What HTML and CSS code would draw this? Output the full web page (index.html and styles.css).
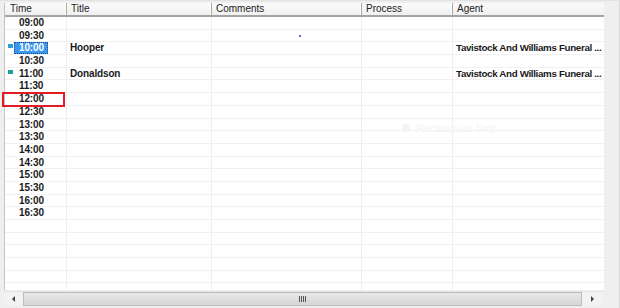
FILE: index.html
```html
<!DOCTYPE html>
<html lang="en">
<head>
    <meta charset="UTF-8">
    <title>Diary</title>
    <link rel="stylesheet" href="styles.css">
</head>
<body>

<div class="window">
    <div class="list">
        <div class="row head">
            <div class="cell first">Time</div>
            <div class="cell">Title</div>
            <div class="cell">Comments</div>
            <div class="cell">Process</div>
            <div class="cell">Agent</div>
        </div>
        <div class="rows">
            <div class="row"><div class="cell time"><span class="mark"></span><span class="t">09:00</span></div><div class="cell"></div><div class="cell"></div><div class="cell"></div><div class="cell"></div></div>
            <div class="row"><div class="cell time"><span class="mark"></span><span class="t">09:30</span></div><div class="cell"></div><div class="cell"></div><div class="cell"></div><div class="cell"></div></div>
            <div class="row"><div class="cell time"><span class="mark blue"></span><span class="t selected">10:00</span></div><div class="cell">Hooper</div><div class="cell"></div><div class="cell"></div><div class="cell agent">Tavistock And Williams Funeral ...</div></div>
            <div class="row"><div class="cell time"><span class="mark"></span><span class="t">10:30</span></div><div class="cell"></div><div class="cell"></div><div class="cell"></div><div class="cell"></div></div>
            <div class="row"><div class="cell time"><span class="mark teal"></span><span class="t">11:00</span></div><div class="cell">Donaldson</div><div class="cell"></div><div class="cell"></div><div class="cell agent">Tavistock And Williams Funeral ...</div></div>
            <div class="row"><div class="cell time"><span class="mark"></span><span class="t">11:30</span></div><div class="cell"></div><div class="cell"></div><div class="cell"></div><div class="cell"></div></div>
            <div class="row"><div class="cell time"><span class="mark"></span><span class="t">12:00</span></div><div class="cell"></div><div class="cell"></div><div class="cell"></div><div class="cell"></div></div>
            <div class="row"><div class="cell time"><span class="mark"></span><span class="t">12:30</span></div><div class="cell"></div><div class="cell"></div><div class="cell"></div><div class="cell"></div></div>
            <div class="row"><div class="cell time"><span class="mark"></span><span class="t">13:00</span></div><div class="cell"></div><div class="cell"></div><div class="cell"></div><div class="cell"></div></div>
            <div class="row"><div class="cell time"><span class="mark"></span><span class="t">13:30</span></div><div class="cell"></div><div class="cell"></div><div class="cell"></div><div class="cell"></div></div>
            <div class="row"><div class="cell time"><span class="mark"></span><span class="t">14:00</span></div><div class="cell"></div><div class="cell"></div><div class="cell"></div><div class="cell"></div></div>
            <div class="row"><div class="cell time"><span class="mark"></span><span class="t">14:30</span></div><div class="cell"></div><div class="cell"></div><div class="cell"></div><div class="cell"></div></div>
            <div class="row"><div class="cell time"><span class="mark"></span><span class="t">15:00</span></div><div class="cell"></div><div class="cell"></div><div class="cell"></div><div class="cell"></div></div>
            <div class="row"><div class="cell time"><span class="mark"></span><span class="t">15:30</span></div><div class="cell"></div><div class="cell"></div><div class="cell"></div><div class="cell"></div></div>
            <div class="row"><div class="cell time"><span class="mark"></span><span class="t">16:00</span></div><div class="cell"></div><div class="cell"></div><div class="cell"></div><div class="cell"></div></div>
            <div class="row"><div class="cell time"><span class="mark"></span><span class="t">16:30</span></div><div class="cell"></div><div class="cell"></div><div class="cell"></div><div class="cell"></div></div>
            <div class="row"><div class="cell time"></div><div class="cell"></div><div class="cell"></div><div class="cell"></div><div class="cell"></div></div>
            <div class="row"><div class="cell time"></div><div class="cell"></div><div class="cell"></div><div class="cell"></div><div class="cell"></div></div>
            <div class="row"><div class="cell time"></div><div class="cell"></div><div class="cell"></div><div class="cell"></div><div class="cell"></div></div>
            <div class="row"><div class="cell time"></div><div class="cell"></div><div class="cell"></div><div class="cell"></div><div class="cell"></div></div>
            <div class="row"><div class="cell time"></div><div class="cell"></div><div class="cell"></div><div class="cell"></div><div class="cell"></div></div>
            <div class="row"><div class="cell time"></div><div class="cell"></div><div class="cell"></div><div class="cell"></div><div class="cell"></div></div>
        </div>
    </div>

    <div class="hscroll">
        <div class="arrow"><span class="tri left"></span></div>
        <div class="thumb"><span class="grip"></span></div>
        <div class="arrow"><span class="tri right"></span></div>
    </div>

    <!-- annotation + screen artefacts over the list -->
    <div class="highlight"></div>
    <div class="dot"></div>
    <div class="snip"><span class="snip-icon"></span>Rectangular Snip</div>
</div>

</body>
</html>
```

FILE: styles.css
```css
body {
    margin: 0;
    font-family: 'Liberation Sans', Arial, sans-serif;
    color: #1a1a1a;
}
.window {
    position: relative;
    width: 620px;
    height: 308px;
    box-sizing: border-box;
    padding: 2px 15px 3px 4px;
    background-color: #efefef;
    border-right: 1px solid #d8d8d8;
    border-top: 1px solid #e2e2e2;
}
.list {
    height: 287px;
    background-color: #fff;
    border-left: 1px solid #c4c4c4;
    overflow: hidden;
}
.row {
    display: grid;
    grid-template-columns: 62px 145px 150px 91px 152px;
    height: 12.7px;
}
.cell {
    box-sizing: border-box;
    padding-left: 3px;
    white-space: nowrap;
    overflow: hidden;
    font-size: 10px;
    font-weight: bold;
    line-height: 12px;
    letter-spacing: -0.15px;
}
.cell.agent {
    font-size: 9.8px;
    letter-spacing: -0.35px;
}
.rows .cell {
    border-right: 1px solid #efefef;
    border-bottom: 1px solid #f1f1f1;
}
.rows .cell:last-child {
    border-right: none;
}
.head {
    height: 14px;
    box-sizing: border-box;
    background: linear-gradient(#fbfbfb, #f0f0f0);
    border-bottom: 2px solid #a3a3a3;
}
.head .cell {
    padding-left: 4px;
    font-size: 10px;
    font-weight: normal;
    letter-spacing: 0;
    color: #222;
    border-right: 1px solid #a8a8a8;
    box-shadow: inset -1px 0 0 #fff;
}
.head .cell.first {
    padding-left: 5px;
}
.head .cell:last-child {
    border-right: none;
    box-shadow: none;
}
.time {
    display: flex;
    align-items: flex-start;
}
.mark {
    flex: none;
    width: 5px;
    height: 4px;
    margin: 2px 1px 0 0;
}
.mark.blue {
    background-color: #2d9fd8;
}
.mark.teal {
    background-color: #16a2a0;
}
.t {
    height: 12px;
    padding: 0 4px 0 5px;
    line-height: 12px;
}
.t.selected {
    background-color: #3a98f0;
    color: #fff;
    outline: 1px dotted #1d4f8a;
    outline-offset: -1px;
}
.hscroll {
    display: flex;
    width: 599px;
    height: 15px;
    margin-top: 1px;
    box-sizing: border-box;
    border-top: 1px solid #e4e4e4;
}
.arrow {
    width: 19px;
    display: flex;
    justify-content: center;
    align-items: center;
    background-color: #f2f2f2;
}
.arrow:last-child {
    width: 21px;
}
.tri {
    width: 0;
    height: 0;
    border-top: 3px solid transparent;
    border-bottom: 3px solid transparent;
}
.tri.left {
    border-right: 3px solid #444;
}
.tri.right {
    border-left: 3px solid #444;
}
.thumb {
    flex: 1;
    display: flex;
    justify-content: center;
    align-items: center;
    box-sizing: border-box;
    background: linear-gradient(#e8e8e8, #d6d6d6);
    border: 1px solid #bdbdbd;
}
.grip {
    width: 7px;
    height: 6px;
    background: repeating-linear-gradient(90deg, #555 0 1px, transparent 1px 2px);
}
.highlight {
    position: absolute;
    left: 2px;
    top: 91px;
    width: 59px;
    height: 11px;
    border: 2px solid #e31b23;
}
.dot {
    position: absolute;
    left: 299px;
    top: 34px;
    width: 2px;
    height: 2px;
    background-color: #6a6af0;
}
.snip {
    position: absolute;
    left: 402px;
    top: 121px;
    display: flex;
    align-items: center;
    gap: 6px;
    font-size: 10.5px;
    color: #f4f4f4;
}
.snip-icon {
    width: 8px;
    height: 8px;
    border-radius: 50%;
    background-color: #f4f4f4;
}
```
